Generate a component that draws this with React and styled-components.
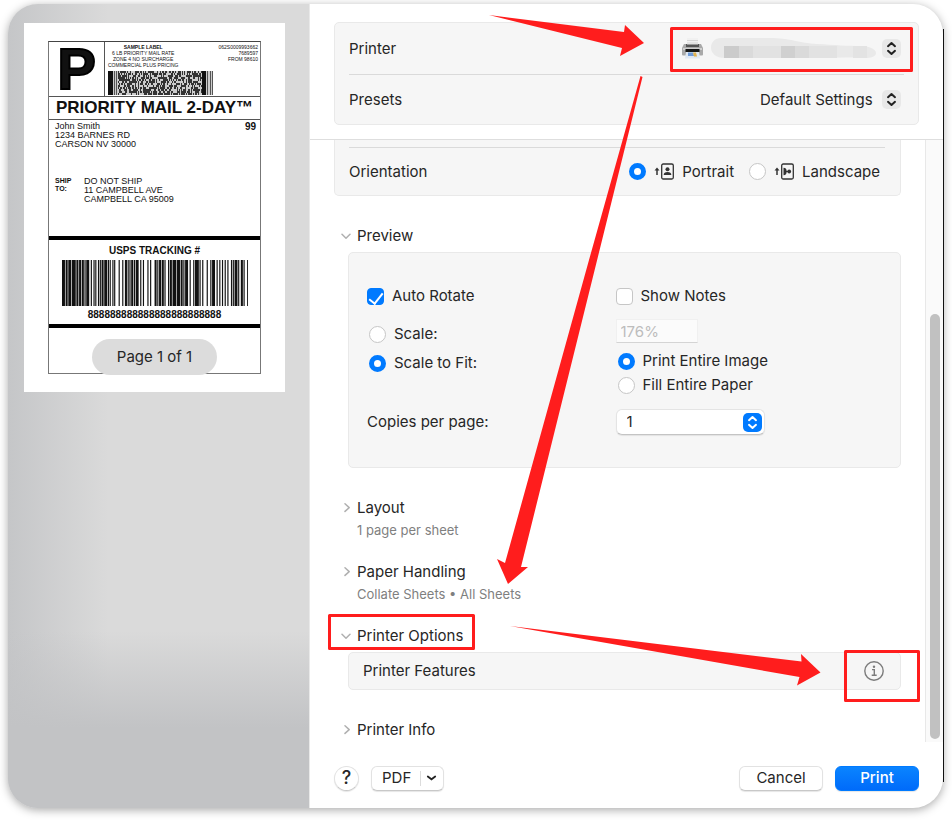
import React from 'react';
import styled, { createGlobalStyle, css } from 'styled-components';

const BLUE = '#007aff';
const RED = '#ff1d1d';

const GlobalStyle = createGlobalStyle`
  * {
    box-sizing: border-box;
  }
  body {
    margin: 0;
    background: #fff;
    color: #262626;
    font-family: Inter, 'Liberation Sans', sans-serif;
    font-size: 15px;
    line-height: 20px;
  }
  button, input, select {
    margin: 0;
    padding: 0;
    font: inherit;
    color: inherit;
  }
  p {
    margin: 0;
  }
`;

const Page = styled.div`
  display: flex;
  min-height: 100vh;
  padding: 4px 9px 12px 8px;
`;

const Dialog = styled.div`
  position: relative;
  display: flex;
  flex: 1;
  border-radius: 30px;
  background: #fff;
  box-shadow: 0 2px 10px rgba(0, 0, 0, 0.34);

  /* dark window edge */
  &::after {
    content: '';
    position: absolute;
    top: 25px;
    bottom: 26px;
    right: -1px;
    width: 1px;
    background: #111;
  }
`;

const Sidebar = styled.aside`
  width: 302px;
  flex-shrink: 0;
  padding: 19px 24px 0 16px;
  border-right: 1px solid #e9e9e9;
  border-radius: 30px 0 0 30px;
  background: linear-gradient(180deg, rgba(194, 195, 197, 0) 78%, #c2c3c5 90%),
    linear-gradient(90deg, #c5c6c8 0, rgba(217, 217, 218, 0) 100px), #dadada;
`;

const Paper = styled.div`
  display: flex;
  flex-direction: column;
  align-items: center;
  padding: 18px 24px 17px;
  background: #fff;
`;

const Label = styled.div`
  width: 100%;
  height: 333px;
  border: 1px solid #777;
  border-top-color: #444;
  color: #111;
  font-family: 'Liberation Sans', sans-serif;
  font-size: 9px;
  line-height: 9px;
`;

const LabelHead = styled.div`
  display: flex;
  height: 55px;
  border-bottom: 1px solid #555;
`;

const LabelMark = styled.div`
  display: flex;
  align-items: center;
  justify-content: center;
  width: 56px;
  border-right: 1px solid #555;
  font-size: 58px;
  line-height: 54px;
  font-weight: 700;
  -webkit-text-stroke: 2px #000;
`;

const LabelInfo = styled.div`
  flex: 1;
  padding: 2px 2px 0 3px;
  font-size: 5px;
  line-height: 6px;
`;

const LabelInfoRow = styled.div`
  display: flex;
  justify-content: space-between;
  height: 27px;
  white-space: nowrap;
`;

const LabelRate = styled.div`
  text-align: center;
`;

const LabelCodes = styled.div`
  text-align: right;
`;

const LabelTitle = styled.div`
  height: 23px;
  border-bottom: 1px solid #555;
  font-size: 17px;
  line-height: 22px;
  font-weight: 700;
  text-align: center;
  white-space: nowrap;
`;

const LabelFrom = styled.div`
  display: flex;
  justify-content: space-between;
  align-items: flex-start;
  height: 54px;
  padding: 2px 4px 0 6px;

  b {
    font-size: 10px;
  }
`;

const LabelTo = styled.div`
  display: flex;
  height: 62px;
  padding: 3px 6px 0;

  b {
    width: 29px;
    font-size: 7px;
    line-height: 8px;
  }
`;

const LabelTracking = styled.div`
  display: flex;
  flex-direction: column;
  align-items: center;
  gap: 2px;
  height: 92px;
  border-top: 4px solid #000;
  border-bottom: 4px solid #000;
  padding-top: 4px;
  font-size: 10px;
  line-height: 14px;
  font-weight: 700;
`;

const PageCount = styled.div`
  margin-top: -35px;
  padding: 8px 25px;
  border-radius: 18px;
  background: #dcdcdc;
  z-index: 1;
`;

const Main = styled.main`
  position: relative;
  display: flex;
  flex: 1;
  flex-direction: column;
  min-width: 0;
`;

const Header = styled.header`
  padding: 18px 24px 14px;
  border-bottom: 1px solid #dedede;
`;

const cardStyle = css`
  border: 1px solid #e9e9e9;
  border-radius: 5px;
  background: #f6f6f6;
`;

const HeaderCard = styled.div`
  ${cardStyle}
  padding: 0 14px;
`;

const HeaderRow = styled.div`
  display: flex;
  align-items: center;
  justify-content: space-between;
  height: ${(props) => (props.$last ? '49px' : '52px')};
  padding-right: 3px;
  border-bottom: ${(props) => (props.$last ? 'none' : '1px solid #dadada')};
`;

const PrinterPicker = styled.div`
  display: flex;
  align-items: center;
  gap: 8px;
`;

/* select and its badge share one grid cell */
const SelectWrap = styled.div`
  display: inline-grid;
  align-items: center;

  > * {
    grid-area: 1 / 1;
  }
`;

const PlainSelect = styled.select`
  appearance: none;
  height: 24px;
  padding-right: 28px;
  border: none;
  background: transparent;
  outline: none;
`;

const PrinterSelect = styled(PlainSelect)`
  width: 190px;
`;

const BoxSelect = styled.select`
  appearance: none;
  width: 149px;
  height: 26px;
  padding: 0 28px 0 10px;
  border: 1px solid #e4e4e4;
  border-bottom-color: #c4c4c4;
  border-radius: 6px;
  background: #fff;
  box-shadow: 0 1px 1px rgba(0, 0, 0, 0.08);
`;

const Badge = styled.span`
  display: flex;
  align-items: center;
  justify-content: center;
  justify-self: end;
  width: 19px;
  height: 19px;
  margin-right: ${(props) => (props.$blue ? '3px' : '0')};
  border-radius: 5px;
  background: ${(props) => (props.$blue ? BLUE : '#e8e8e8')};
  color: ${(props) => (props.$blue ? '#fff' : '#222')};
  pointer-events: none;
`;

const Mosaic = styled.svg`
  display: block;
  pointer-events: none;
`;

const Body = styled.div`
  display: flex;
  flex: 1;
`;

const Options = styled.div`
  flex: 1;
  min-width: 0;
  padding: 0 24px;
`;

const Track = styled.div`
  display: flex;
  align-items: flex-end;
  justify-content: center;
  width: 18px;
  padding-bottom: 3px;
  border-left: 1px solid #e8e8e8;
  background: #fafafa;
`;

const Thumb = styled.div`
  width: 10px;
  height: 71%;
  border-radius: 5px;
  background: #c1c1c1;
`;

const OrientationCard = styled.div`
  ${cardStyle}
  border-top: none;
  border-radius: 0 0 5px 5px;
  padding: 7px 15px 0 14px;
`;

const OrientationRow = styled.div`
  display: flex;
  align-items: center;
  justify-content: space-between;
  height: 48px;
  padding-right: 5px;
  border-top: 1px solid #dadada;
`;

const OrientationChoices = styled.div`
  display: flex;
  gap: 15px;
`;

const Choice = styled.label`
  display: flex;
  align-items: center;
  gap: 8px;
  height: 24px;
  white-space: nowrap;
`;

const Radio = styled.input.attrs({ type: 'radio' })`
  appearance: none;
  flex-shrink: 0;
  width: 17px;
  height: 17px;
  border: 1px solid #c6c6c6;
  border-radius: 50%;
  background: #fff;

  &:checked {
    border: 5px solid ${BLUE};
  }
`;

const Checkbox = styled.input.attrs({ type: 'checkbox' })`
  appearance: none;
  display: grid;
  justify-content: center;
  align-content: start;
  flex-shrink: 0;
  width: 17px;
  height: 17px;
  border: 1px solid #c6c6c6;
  border-radius: 4px;
  background: #fff;

  &:checked {
    border-color: ${BLUE};
    background: ${BLUE};
  }
  &:checked::after {
    content: '';
    width: 6px;
    height: 12px;
    margin-top: 1px;
    border: solid #fff;
    border-width: 0 2px 2px 0;
    transform: rotate(38deg);
  }
`;

const Section = styled.section`
  padding-left: 7px;
  margin-top: ${(props) => (props.$tight ? '22px' : '30px')};
`;

const Disclosure = styled.button`
  display: flex;
  align-items: center;
  gap: 6px;
  height: 20px;
  border: none;
  background: none;
`;

const Summary = styled.p`
  margin-top: 2px;
  padding-left: 16px;
  color: #7f7f7f;
  font-size: 13px;
`;

const PreviewCard = styled.div`
  ${cardStyle}
  display: grid;
  grid-template-columns: 1fr 1fr;
  row-gap: 11px;
  margin: 6px 0 0 7px;
  padding: 31px 36px 32px 18px;
`;

const ScaleModes = styled.div`
  display: flex;
  flex-direction: column;
  gap: 5px;
  padding: 3px 0 0 2px;
`;

const FitModes = styled.div`
  display: flex;
  flex-direction: column;
  align-items: flex-start;
  padding-bottom: 1px;

  label {
    margin-left: 2px;
  }
`;

const ScaleInput = styled.input`
  width: 82px;
  height: 24px;
  margin-bottom: 6px;
  padding: 0 4px;
  border: 1px solid #f0f0f0;
  border-bottom-color: #d4d4d4;
  background: #fbfbfb;
  color: #bdbdbd;
`;

const FieldLabel = styled.label`
  align-self: center;
`;

const FeatureCard = styled.div`
  ${cardStyle}
  display: flex;
  align-items: center;
  justify-content: space-between;
  height: 38px;
  margin: 6px 0 0 7px;
  padding: 0 16px 0 14px;
`;

const IconButton = styled.button`
  display: flex;
  border: none;
  background: none;
`;

const Footer = styled.footer`
  display: flex;
  align-items: center;
  gap: 12px;
  height: 66px;
  padding: 6px 24px 0;
`;

const buttonStyle = css`
  height: 25px;
  border: 1px solid #e2e2e2;
  border-bottom-color: #c8c8c8;
  background: #fff;
  box-shadow: 0 1px 1px rgba(0, 0, 0, 0.1);
`;

const HelpButton = styled.button`
  ${buttonStyle}
  width: 25px;
  border-radius: 50%;
  font-size: 18px;
  font-weight: 500;
`;

const PdfGroup = styled.div`
  ${buttonStyle}
  display: flex;
  align-items: center;
  margin-right: auto;
  border-radius: 6px;

  button {
    display: flex;
    align-items: center;
    height: 15px;
    border: none;
    background: none;
  }
  button:first-child {
    padding: 0 9px 0 10px;
    border-right: 1px solid #dcdcdc;
  }
  button:last-child {
    padding: 0 6px 0 5px;
  }
`;

const ActionButton = styled.button`
  ${buttonStyle}
  width: 84px;
  border-radius: 6px;
  ${(props) =>
    props.$primary &&
    css`
      border-color: ${BLUE};
      background: linear-gradient(#0a84ff, #006bfa);
      color: #fff;
      font-weight: 500;
    `}
`;

const Annotations = styled.svg`
  position: absolute;
  top: 0;
  left: 0;
  pointer-events: none;
`;

// bar widths, alternating black and white
const TRACKING_BARS =
  '3121314121212111321211121111213111121114131221111121113212141214211121211311214131211132131141121413113212121212131111311221131';
const PDF_ROWS = 12;
const PDF_COLS = 84;

const TrackingBarcode = () => {
  const widths = TRACKING_BARS.split('').map(Number);
  const total = widths.reduce((a, b) => a + b, 0);
  let x = 0;
  return (
    <svg width="186" height="46" viewBox={`0 0 ${total} 46`} preserveAspectRatio="none" aria-hidden="true">
      {widths.map((w, i) => {
        const left = x;
        x += w;
        return i % 2 === 0 ? <rect key={i} x={left} y="0" width={w + 0.3} height="46" fill="#111" /> : null;
      })}
    </svg>
  );
};

const StackedBarcode = () => {
  const cells = [];
  let seed = 7;
  for (let row = 0; row < PDF_ROWS; row += 1) {
    for (let col = 0; col < PDF_COLS; col += 1) {
      seed = (seed * 1103515245 + 12345) % 2147483648;
      if (seed / 2147483648 > 0.42) {
        cells.push(`M${10 + col} ${row * 2}h1v2h-1z`);
      }
    }
  }
  return (
    <svg width="105" height="24" viewBox="0 0 105 24" aria-hidden="true">
      <rect width="105" height="24" fill="#ccc" />
      <path d="M0 0h5v24h-5zM94 0h4v24h-4z" fill="#111" />
      <path d="M6 0h1v24h-1zM8 0h1v24h-1zM99 0h1v24h-1zM102 0h1v24h-1zM104 0h1v24h-1z" fill="#555" />
      <path d={cells.join('')} fill="#333" />
    </svg>
  );
};

const UpDown = () => (
  <svg width="11" height="15" viewBox="0 0 11 15" fill="none" stroke="currentColor" strokeWidth="2" strokeLinecap="round" strokeLinejoin="round">
    <path d="M2 5.2 5.5 2 9 5.2M2 9.8 5.5 13 9 9.8" />
  </svg>
);

const Chevron = ({ open }) => (
  <svg width="10" height="10" viewBox="0 0 10 10" fill="none" stroke="#b0b0b0" strokeWidth="1.5" strokeLinecap="round" strokeLinejoin="round">
    <path d={open ? 'M1 3.2 5 7.2 9 3.2' : 'M4 0.8 8.2 4.6 4 8.4'} />
  </svg>
);

const PrinterIcon = () => (
  <svg width="21" height="21" viewBox="0 0 21 21">
    <path d="M5 0h11v9H5z" fill="#f1f1f1" />
    <path d="M5 2h11v1H5zM5 4h11v1H5z" fill="#d6d6d6" />
    <path d="M2 6h17l2 4v6.500a1 1 0 0 1-1 1H1a1 1 0 0 1-1-1V10z" fill="#a9a9a9" />
    <path d="M4 6h13v3H4z" fill="#555" />
    <path d="M5 4h11v2.500H5z" fill="#e4e4e4" />
    <path d="M1 10h19v2H1z" fill="#cfcfcf" />
    <path d="M3.500 11h14v3h-14z" fill="#151515" />
    <path d="M4 14h13l1 6.500H3z" fill="#dfe8f3" />
    <path d="M6 14.500h5l1 3.500H6z" fill="#6f9bd8" />
    <path d="M11 14.500h3l1 4h-3z" fill="#e0b04c" />
  </svg>
);

const RedactedName = () => (
  <Mosaic width="166" height="22" viewBox="0 0 166 22">
    <path
      d="M10 0h48c22 0 30 5 48 6 18 1 30 2 44 2 10 0 15 4 15 7 0 4-6 5-10 5-20-1-40 0-60 0H14C5 20 0 15 0 10 0 4 4 0 10 0z"
      fill="#e9e9e9"
    />
    <path d="M13 8h15v12H13z" fill="#cbcbcb" />
    <path d="M28 8h14v12H28zM84 8h14v12H84z" fill="#dadada" />
    <path d="M42 8h28v12H42zM98 8h28v12H98z" fill="#e2e2e2" />
    <path d="M70 8h14v12H70z" fill="#d0d0d0" />
    <path d="M142 8h14v12h-14z" fill="#e3e3e3" />
  </Mosaic>
);

const PortraitIcon = () => (
  <svg width="20" height="17" viewBox="0 0 20 17" fill="none">
    <path d="M3 12V6.500" stroke="#333" strokeWidth="1.500" />
    <path d="M0.500 7.500 3 4.500l2.500 3z" fill="#333" />
    <rect x="7.700" y="1" width="11.600" height="15" rx="1.500" stroke="#333" strokeWidth="1.300" />
    <circle cx="13.500" cy="6.300" r="2" fill="#333" />
    <path d="M9.700 12c0-2.300 1.500-3 3.800-3s3.800.700 3.800 3z" fill="#333" />
  </svg>
);

const LandscapeIcon = () => (
  <svg width="20" height="17" viewBox="0 0 20 17" fill="none">
    <path d="M3 12V6.500" stroke="#333" strokeWidth="1.500" />
    <path d="M0.500 7.500 3 4.500l2.500 3z" fill="#333" />
    <rect x="7.700" y="1" width="11.600" height="15" rx="1.500" stroke="#333" strokeWidth="1.300" />
    <circle cx="15.200" cy="8.500" r="1.900" fill="#333" />
    <path d="M9.500 4.700c2.300 0 3.200 1.500 3.200 3.800s-.900 3.800-3.200 3.800z" fill="#333" />
    <path d="M12 8h3v1h-3z" fill="#333" />
  </svg>
);

const InfoIcon = () => (
  <svg width="20" height="20" viewBox="0 0 20 20" fill="none" stroke="#7c7c7c">
    <circle cx="10" cy="10" r="9.200" strokeWidth="1.400" />
    <path d="M8 8.600h2.300v5.600M7.700 14.300h5" strokeWidth="1.400" />
    <circle cx="10" cy="5.700" r="1.200" fill="#7c7c7c" stroke="none" />
  </svg>
);

const ShippingLabel = () => (
  <Label>
    <LabelHead>
      <LabelMark>P</LabelMark>
      <LabelInfo>
        <LabelInfoRow>
          <LabelRate>
            <b>SAMPLE LABEL</b>
            <br />
            6 LB PRIORITY MAIL RATE
            <br />
            ZONE 4 NO SURCHARGE
            <br />
            COMMERCIAL PLUS PRICING
          </LabelRate>
          <LabelCodes>
            062S0009993662
            <br />
            7689597
            <br />
            FROM 98610
          </LabelCodes>
        </LabelInfoRow>
        <StackedBarcode />
      </LabelInfo>
    </LabelHead>
    <LabelTitle>PRIORITY MAIL 2-DAY™</LabelTitle>
    <LabelFrom>
      <p>
        John Smith
        <br />
        1234 BARNES RD
        <br />
        CARSON NV 30000
      </p>
      <b>99</b>
    </LabelFrom>
    <LabelTo>
      <b>
        SHIP
        <br />
        TO:
      </b>
      <p>
        DO NOT SHIP
        <br />
        11 CAMPBELL AVE
        <br />
        CAMPBELL CA 95009
      </p>
    </LabelTo>
    <LabelTracking>
      USPS TRACKING #
      <TrackingBarcode />
      <span>888888888888888888888888</span>
    </LabelTracking>
  </Label>
);

const App = () => (
  <>
    <GlobalStyle />
    <Page>
      <Dialog role="dialog" aria-label="Print">
        <Sidebar>
          <Paper>
            <ShippingLabel />
            <PageCount>Page 1 of 1</PageCount>
          </Paper>
        </Sidebar>
        <Main>
          <Header>
            <HeaderCard>
              <HeaderRow>
                <label htmlFor="printer">Printer</label>
                <PrinterPicker>
                  <PrinterIcon />
                  <SelectWrap>
                    <PrinterSelect id="printer">
                      <option value="default" />
                    </PrinterSelect>
                    <RedactedName />
                    <Badge>
                      <UpDown />
                    </Badge>
                  </SelectWrap>
                </PrinterPicker>
              </HeaderRow>
              <HeaderRow $last>
                <label htmlFor="presets">Presets</label>
                <SelectWrap>
                  <PlainSelect id="presets">
                    <option>Default Settings</option>
                  </PlainSelect>
                  <Badge>
                    <UpDown />
                  </Badge>
                </SelectWrap>
              </HeaderRow>
            </HeaderCard>
          </Header>

          <Body>
            <Options>
              <OrientationCard>
                <OrientationRow>
                  <span>Orientation</span>
                  <OrientationChoices>
                    <Choice>
                      <Radio name="orientation" defaultChecked />
                      <PortraitIcon />
                      Portrait
                    </Choice>
                    <Choice>
                      <Radio name="orientation" />
                      <LandscapeIcon />
                      Landscape
                    </Choice>
                  </OrientationChoices>
                </OrientationRow>
              </OrientationCard>

              <Section>
                <Disclosure aria-expanded="true">
                  <Chevron open />
                  Preview
                </Disclosure>
                <PreviewCard>
                  <Choice>
                    <Checkbox defaultChecked />
                    Auto Rotate
                  </Choice>
                  <Choice>
                    <Checkbox />
                    Show Notes
                  </Choice>
                  <ScaleModes>
                    <Choice>
                      <Radio name="scale" />
                      Scale:
                    </Choice>
                    <Choice>
                      <Radio name="scale" defaultChecked />
                      Scale to Fit:
                    </Choice>
                  </ScaleModes>
                  <FitModes>
                    <ScaleInput type="text" aria-label="Scale" defaultValue="176%" disabled />
                    <Choice>
                      <Radio name="fit" defaultChecked />
                      Print Entire Image
                    </Choice>
                    <Choice>
                      <Radio name="fit" />
                      Fill Entire Paper
                    </Choice>
                  </FitModes>
                  <FieldLabel htmlFor="copies">Copies per page:</FieldLabel>
                  <div>
                    <SelectWrap>
                      <BoxSelect id="copies">
                        <option>1</option>
                      </BoxSelect>
                      <Badge $blue>
                        <UpDown />
                      </Badge>
                    </SelectWrap>
                  </div>
                </PreviewCard>
              </Section>

              <Section>
                <Disclosure aria-expanded="false">
                  <Chevron />
                  Layout
                </Disclosure>
                <Summary>1 page per sheet</Summary>
              </Section>

              <Section $tight>
                <Disclosure aria-expanded="false">
                  <Chevron />
                  Paper Handling
                </Disclosure>
                <Summary>Collate Sheets • All Sheets</Summary>
              </Section>

              <Section $tight>
                <Disclosure aria-expanded="true">
                  <Chevron open />
                  Printer Options
                </Disclosure>
                <FeatureCard>
                  <span>Printer Features</span>
                  <IconButton aria-label="Printer Features info">
                    <InfoIcon />
                  </IconButton>
                </FeatureCard>
              </Section>

              <Section>
                <Disclosure aria-expanded="false">
                  <Chevron />
                  Printer Info
                </Disclosure>
              </Section>
            </Options>
            <Track>
              <Thumb />
            </Track>
          </Body>

          <Footer>
            <HelpButton aria-label="Help">?</HelpButton>
            <PdfGroup>
              <button>PDF</button>
              <button aria-label="PDF options">
                <svg width="11" height="8" viewBox="0 0 11 8" fill="none" stroke="#222" strokeWidth="1.800" strokeLinecap="round">
                  <path d="M1.800 2.500 5.500 5.300 9.200 2.500" />
                </svg>
              </button>
            </PdfGroup>
            <ActionButton>Cancel</ActionButton>
            <ActionButton $primary>Print</ActionButton>
          </Footer>

          {/* callouts that walk through the dialog */}
          <Annotations width="633" height="804" viewBox="310 4 633 804" aria-hidden="true">
            <g fill={RED}>
              <path d="M489 15 624 32 625 25 644 43 620 56 622 48z" />
              <path d="M640.500 76 642.500 77 521 567 528 567 508 584 497 559 505 563 589 260z" />
              <path d="M510 626 801.500 661.500 801 654 820.500 672.500 797 685.500 799.500 677z" />
            </g>
            <g fill="none" stroke={RED} strokeWidth="3" strokeLinejoin="round">
              <rect x="671.500" y="28.500" width="240" height="42" />
              <rect x="329.500" y="615.500" width="144" height="33" />
              <rect x="845.500" y="651.500" width="73" height="49" />
            </g>
          </Annotations>
        </Main>
      </Dialog>
    </Page>
  </>
);

export default App;
